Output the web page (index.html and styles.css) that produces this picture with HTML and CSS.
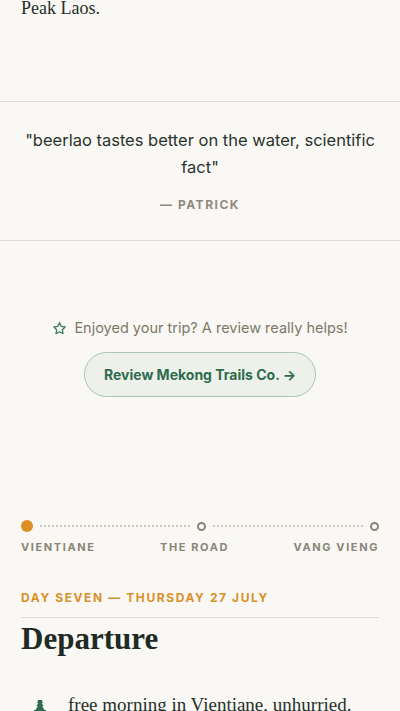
FILE: index.html
```html
<!DOCTYPE html>
<html lang="en">
<head>
    <meta charset="UTF-8">
    <meta name="viewport" content="width=device-width, initial-scale=1.0">
    <title>Mekong Trails - Day Seven</title>
    <link rel="stylesheet" href="styles.css">
</head>
<body>
    <div class="intro">
        <p>Peak Laos.</p>
    </div>

    <blockquote class="quote">
        <p>"beerlao tastes better on the water, scientific fact"</p>
        <cite>— Patrick</cite>
    </blockquote>

    <div class="review">
        <p class="review-note">
            <svg class="star" viewBox="0 0 24 24" width="15" height="15"><path d="M12 2.8l2.8 5.8 6.3.9-4.6 4.4 1.1 6.3L12 17.2l-5.6 3 1.1-6.3-4.6-4.4 6.3-.9z" fill="none" stroke="currentColor" stroke-width="2" stroke-linejoin="round"/></svg>
            Enjoyed your trip? A review really helps!
        </p>
        <a class="review-btn" href="#">Review Mekong Trails Co. →</a>
    </div>

    <div class="route">
        <div class="route-track">
            <span class="stop current"></span>
            <span class="dots"></span>
            <span class="stop"></span>
            <span class="dots"></span>
            <span class="stop"></span>
        </div>
        <div class="route-labels">
            <span>Vientiane</span>
            <span>The Road</span>
            <span>Vang Vieng</span>
        </div>
    </div>

    <section class="day">
        <div class="day-label">Day Seven — Thursday 27 July</div>
        <h2>Departure</h2>
        <ul class="plan">
            <li>
                <!-- small temple mark -->
                <svg class="plan-icon" viewBox="0 0 14 16" width="14" height="16"><path d="M5 0h4l.8 3H8.6l2 3H9.2l2.3 4H13v6H1v-6h1.5L4.8 6H3.4l2-3H4.2z" fill="#2e6b4f"/></svg>
                <span>free morning in Vientiane, unhurried.</span>
            </li>
        </ul>
    </section>
</body>
</html>
```

FILE: styles.css
```css
body {
    margin: 0;
    background-color: #f9f8f4;
    color: #25302a;
    font-family: Inter, "Liberation Sans", sans-serif;
}
.intro {
    padding: 0 21px 84px;
}
.intro p {
    margin: 0;
    font-family: "Liberation Serif", serif;
    font-size: 18px;
    line-height: 17px;
}
.quote {
    margin: 0;
    padding: 25px 16px 27px;
    border-top: 1px solid #dedcd5;
    border-bottom: 1px solid #dedcd5;
    text-align: center;
}
.quote p {
    margin: 0;
    font-size: 16.5px;
    line-height: 27px;
    color: #2a332e;
}
.quote cite {
    display: block;
    margin-top: 16px;
    font-style: normal;
    font-size: 12px;
    line-height: 16px;
    font-weight: 700;
    letter-spacing: 1.5px;
    text-transform: uppercase;
    color: #8e8a7b;
}
.review {
    padding: 77px 21px 0;
    display: flex;
    flex-direction: column;
    align-items: center;
}
.review-note {
    margin: 0;
    display: flex;
    align-items: center;
    gap: 7px;
    font-size: 14.5px;
    line-height: 20px;
    color: #7d7868;
}
.star {
    color: #3c7a5c;
}
.review-btn {
    margin-top: 14px;
    padding: 0 19px;
    height: 43px;
    display: flex;
    align-items: center;
    border: 1px solid #a9c7b3;
    border-radius: 24px;
    background-color: #edf1ea;
    color: #2e6b4f;
    font-size: 14px;
    font-weight: 700;
    text-decoration: none;
}
.route {
    padding: 123px 21px 0;
}
.route-track {
    display: flex;
    align-items: center;
    gap: 7px;
    height: 12px;
}
.stop {
    width: 9px;
    height: 9px;
    box-sizing: border-box;
    border: 2px solid #8a8577;
    border-radius: 50%;
}
.stop.current {
    width: 12px;
    height: 12px;
    border: none;
    background-color: #dc8f22;
}
.dots {
    flex: 1;
    border-top: 2px dotted #cfcabd;
}
.route-labels {
    display: flex;
    justify-content: space-between;
    margin-top: 8px;
    font-size: 11px;
    line-height: 14px;
    font-weight: 700;
    letter-spacing: 1.6px;
    text-transform: uppercase;
    color: #8a8577;
}
.day {
    padding: 36px 21px 0;
}
.day-label {
    padding-bottom: 11px;
    border-bottom: 1px solid #dedcd5;
    font-size: 12px;
    line-height: 16px;
    font-weight: 700;
    letter-spacing: 1.6px;
    text-transform: uppercase;
    color: #d8902a;
}
.day h2 {
    margin: 4px 0 0;
    font-family: "Liberation Serif", serif;
    font-size: 31px;
    line-height: 34px;
    font-weight: 700;
    color: #1f2a24;
}
.plan {
    list-style: none;
    margin: 0;
    padding: 36px 0 0 12px;
}
.plan li {
    display: flex;
    align-items: flex-start;
    gap: 21px;
    font-family: "Liberation Serif", serif;
    font-size: 19px;
    line-height: 26px;
}
.plan-icon {
    margin-top: 8px;
    flex-shrink: 0;
}
```
